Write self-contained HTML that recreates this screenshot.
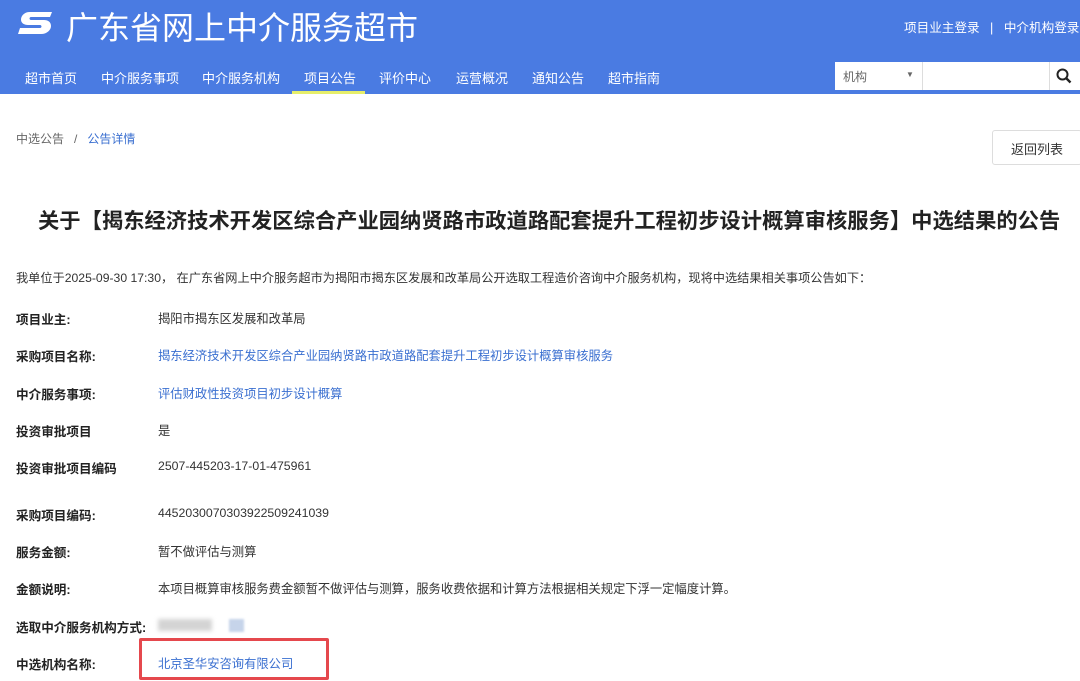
<!DOCTYPE html>
<html><head><meta charset="utf-8"><style>
*{margin:0;padding:0;box-sizing:border-box}
body{width:1080px;height:681px;overflow:hidden;background:#fff;font-family:"Liberation Sans","Noto Sans CJK SC",sans-serif;color:#333;position:relative}
.hdr{position:absolute;left:0;top:0;width:1080px;height:94px;background:#4a7be2}
.ab{position:absolute;white-space:nowrap}
.nav{top:68px;font-size:13px;color:#fff}
.lbl{left:16px;font-size:12.6px;font-weight:bold;color:#222}
.val{left:158px;font-size:12.3px;color:#333}
.lnk{color:#3a6fd0}
</style></head><body>
<div class="hdr"></div>
<svg class="ab" style="left:16px;top:8px" width="40" height="30" viewBox="0 0 40 30"><path d="M36 4H14C8 4 5 8 5 11.5C5 15 8 17 12 17H24C26 17 26 20 24 20H4L2 26H25C31 26 35 22 35 18C35 14 32 12 28 12H15C13 12 13 9 15 9H34Z" fill="#fff"/></svg>
<div class="ab" style="left:66px;top:3px;font-size:32px;color:#fff">广东省网上中介服务超市</div>
<div class="ab" style="left:904px;top:17px;font-size:12.6px;color:#fff">项目业主登录 &nbsp; | &nbsp; 中介机构登录</div>
<div class="ab nav" style="left:25px">超市首页</div>
<div class="ab nav" style="left:101px">中介服务事项</div>
<div class="ab nav" style="left:202px">中介服务机构</div>
<div class="ab nav" style="left:304px">项目公告</div>
<div class="ab" style="left:292px;top:91px;width:73px;height:3px;background:#e6ee6a"></div>
<div class="ab nav" style="left:379px">评价中心</div>
<div class="ab nav" style="left:456px">运营概况</div>
<div class="ab nav" style="left:532px">通知公告</div>
<div class="ab nav" style="left:608px">超市指南</div>
<div class="ab" style="left:835px;top:62px;width:245px;height:28px;background:#fff"></div>
<div class="ab" style="left:843px;top:68px;font-size:12px;color:#666">机构</div>
<div class="ab" style="left:906px;top:70px;font-size:8px;color:#666">▼</div>
<div class="ab" style="left:922px;top:62px;width:1px;height:28px;background:#ddd"></div>
<div class="ab" style="left:1049px;top:62px;width:1px;height:28px;background:#ddd"></div>
<svg class="ab" style="left:1056px;top:68px" width="16" height="16" viewBox="0 0 16 16"><circle cx="6.5" cy="6.5" r="5" stroke="#222" stroke-width="2" fill="none"/><path d="M10 10L14.5 14.5" stroke="#222" stroke-width="2.4"/></svg>
<div class="ab" style="left:16px;top:130px;font-size:12px;color:#666">中选公告 &nbsp; / &nbsp; <span class="lnk">公告详情</span></div>
<div class="ab" style="left:992px;top:130px;width:90px;height:35px;border:1px solid #ddd;border-radius:3px;font-size:13px;color:#333;padding:8px 0 0 18px">返回列表</div>
<div class="ab" style="left:38px;top:204px;font-size:21.3px;font-weight:bold;color:#222">关于【揭东经济技术开发区综合产业园纳贤路市政道路配套提升工程初步设计概算审核服务】中选结果的公告</div>
<div class="ab" style="left:16px;top:268px;font-size:12.2px;color:#333">我单位于2025-09-30 17:30， 在广东省网上中介服务超市为揭阳市揭东区发展和改革局公开选取工程造价咨询中介服务机构，现将中选结果相关事项公告如下：</div>
<div class="ab lbl" style="top:309px">项目业主:</div><div class="ab val" style="top:309px">揭阳市揭东区发展和改革局</div>
<div class="ab lbl" style="top:346px">采购项目名称:</div><div class="ab val lnk" style="top:346px">揭东经济技术开发区综合产业园纳贤路市政道路配套提升工程初步设计概算审核服务</div>
<div class="ab lbl" style="top:384px">中介服务事项:</div><div class="ab val lnk" style="top:384px">评估财政性投资项目初步设计概算</div>
<div class="ab lbl" style="top:421px">投资审批项目</div><div class="ab val" style="top:421px">是</div>
<div class="ab lbl" style="top:458px">投资审批项目编码</div><div class="ab val" style="top:459px">2507-445203-17-01-475961</div>
<div class="ab lbl" style="top:505px">采购项目编码:</div><div class="ab val" style="top:506px">4452030070303922509241039</div>
<div class="ab lbl" style="top:542px">服务金额:</div><div class="ab val" style="top:542px">暂不做评估与测算</div>
<div class="ab lbl" style="top:579px">金额说明:</div><div class="ab val" style="top:579px">本项目概算审核服务费金额暂不做评估与测算，服务收费依据和计算方法根据相关规定下浮一定幅度计算。</div>
<div class="ab lbl" style="top:617px">选取中介服务机构方式:</div>
<div class="ab" style="left:158px;top:619px;width:54px;height:12px;background:#d4d4d4;filter:blur(2px)"></div>
<div class="ab" style="left:229px;top:619px;width:15px;height:13px;background:#c6d4ea;filter:blur(1px)"></div>
<div class="ab lbl" style="top:654px">中选机构名称:</div><div class="ab val lnk" style="top:654px">北京圣华安咨询有限公司</div>
<div class="ab" style="left:139px;top:638px;width:190px;height:42px;border:3px solid #e5484d;border-radius:2px"></div>
</body></html>
